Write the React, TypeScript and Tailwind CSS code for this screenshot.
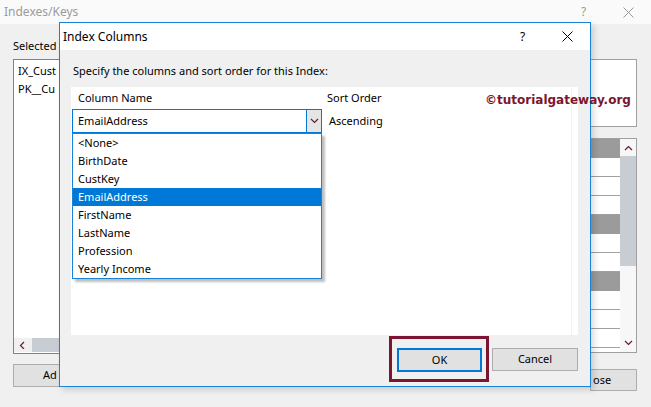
import React from "react";

const columns = [
  "<None>",
  "BirthDate",
  "CustKey",
  "EmailAddress",
  "FirstName",
  "LastName",
  "Profession",
  "Yearly Income",
];

// c = category row, r = plain property row
const gridRows = ["c", "r", "r", "r", "c", "r", "r", "c", "r", "r", "r"];

function CloseGlyph({ color = "#000" }: { color?: string }) {
  return (
    <svg width="11" height="11" viewBox="0 0 11 11">
      <path d="M0.5 0.5 L10.5 10.5 M10.5 0.5 L0.5 10.5" stroke={color} strokeWidth="1" />
    </svg>
  );
}

function Chevron({ dir, color = "#6b1a2c" }: { dir: "up" | "down" | "left"; color?: string }) {
  const d =
    dir === "down"
      ? "M1 2 L4.5 5.5 L8 2"
      : dir === "up"
      ? "M1 6 L4.5 2.5 L8 6"
      : "M6 1 L2.5 4.5 L6 8";
  return (
    <svg width="9" height="8" viewBox="0 0 9 8">
      <path d={d} stroke={color} strokeWidth="1.2" fill="none" />
    </svg>
  );
}

export default function App() {
  return (
    <div className="relative w-[651px] h-[407px] overflow-hidden bg-[#f0f0f0] font-['Noto_Sans',sans-serif] text-[11px] text-black">
      {/* background dialog: Indexes/Keys */}
      <div className="flex h-[24px] items-center bg-[#fafafa] pl-[4px] text-[#9a9a9a]">
        <span className="text-[12px]">Indexes/Keys</span>
        <div className="ml-auto flex h-full items-center">
          <span className="w-[45px] text-center text-[12px]">?</span>
          <span className="flex w-[45px] justify-center">
            <CloseGlyph color="#9a9a9a" />
          </span>
        </div>
      </div>

      <div className="flex">
        {/* left column, cut off by the dialog on top */}
        <div className="ml-[13px] flex w-[47px] flex-col overflow-hidden whitespace-nowrap">
          <div className="mt-[14px] h-[16px] leading-[16px]">Selected</div>
          <div className="mt-[5px] flex h-[295px] w-[210px] flex-col border border-[#828282] bg-white">
            <div className="flex-1 pt-[2px] pl-[4px]">
              <div className="h-[18px] leading-[18px]">IX_Cust</div>
              <div className="h-[18px] leading-[18px]">PK__Cu</div>
            </div>
            <div className="mb-[1px] flex h-[14px] items-center bg-[#f0f0f0]">
              <span className="flex w-[17px] justify-center">
                <Chevron dir="left" />
              </span>
              <div className="ml-[1px] h-full w-[150px] bg-[#c8cdd3]" />
            </div>
          </div>
          <div className="mt-[10px] flex h-[23px] w-[86px] items-center border border-[#adadad] bg-[#e1e1e1] pl-[29px]">
            Ad
          </div>
        </div>

        {/* right column, cut off by the dialog on top */}
        <div className="ml-auto mr-[14px] flex w-[47px] flex-col overflow-hidden">
          <div className="mt-[35px] h-[68px] border border-[#a0a0a0] bg-white" />
          <div className="mt-[11px] flex h-[215px] border border-[#a0a0a0] bg-white">
            <div className="flex-1">
              {gridRows.map((t, i) =>
                t === "c" ? (
                  <div key={i} className="h-[19px] bg-[#9b9b9b]" />
                ) : (
                  <div key={i} className="h-[19px] border-b border-[#a0a0a0] bg-white" />
                )
              )}
            </div>
            <div className="flex w-[16px] flex-col bg-[#f7f7f7]">
              <div className="flex h-[17px] items-center justify-center">
                <Chevron dir="up" />
              </div>
              <div className="h-[110px] bg-[#c8cdd3]" />
              <div className="mt-auto mb-[2px] flex h-[14px] items-center justify-center">
                <Chevron dir="down" />
              </div>
            </div>
          </div>
          <div className="mt-[16px] flex h-[22px] items-center border border-[#adadad] bg-[#e1e1e1] pl-[2px]">
            ose
          </div>
        </div>
      </div>

      {/* foreground dialog: Index Columns */}
      <div className="absolute left-[59px] top-[22px] flex h-[365px] w-[532px] flex-col border border-[#1883d7] bg-[#f0f0f0] shadow-[3px_3px_6px_rgba(0,0,0,0.15)]">
        <div className="flex h-[27px] items-center bg-white pl-[3px]">
          <span className="text-[12px]">Index Columns</span>
          <div className="ml-auto flex h-full items-center">
            <span className="w-[45px] text-center text-[12px]">?</span>
            <span className="flex w-[45px] justify-center">
              <CloseGlyph />
            </span>
          </div>
        </div>

        <div className="flex flex-1 flex-col">
          <div className="mt-[13px] ml-[13px] h-[16px] leading-[16px]">
            Specify the columns and sort order for this Index:
          </div>

          <div className="relative mt-[8px] ml-[11px] h-[248px] w-[507px] bg-white">
            <div className="flex h-[22px] items-center">
              <div className="w-[251px] pl-[7px]">Column Name</div>
              <div className="flex-1 pl-[5px]">Sort Order</div>
            </div>
            <div className="flex h-[24px]">
              <div className="ml-[1px] flex w-[250px] border border-[#0078d7] bg-white">
                <div className="flex flex-1 items-center pl-[5px]">EmailAddress</div>
                <div className="flex w-[15px] items-center justify-center border-l border-[#0078d7] bg-[#e5e5e5]">
                  <Chevron dir="down" />
                </div>
              </div>
              <div className="flex flex-1 items-center pl-[7px]">Ascending</div>
            </div>
            <div className="absolute top-0 bottom-0 right-[6px] border-l border-[#f3f3f3]" />

            {/* open dropdown */}
            <div className="absolute left-[1px] top-[46px] w-[250px] border border-[#1883d7] bg-white shadow-[3px_3px_2px_rgba(0,0,0,0.25)]">
              {columns.map((c) => (
                <div
                  key={c}
                  className={
                    c === "EmailAddress"
                      ? "h-[18px] bg-[#0078d7] pl-[5px] leading-[18px] text-white"
                      : "h-[18px] pl-[5px] leading-[18px]"
                  }
                >
                  {c}
                </div>
              ))}
            </div>
          </div>

          <div className="mt-[13px] mr-[12px] flex justify-end gap-[10px]">
            <div className="relative">
              <button className="h-[24px] w-[85px] border-2 border-[#0078d7] bg-[#e1e1e1] text-center">
                OK
              </button>
              <div className="absolute -left-[8px] -right-[7px] -top-[12px] -bottom-[10px] border-[3px] border-[#7b1530]" />
            </div>
            <button className="h-[23px] w-[86px] border border-[#adadad] bg-[#e1e1e1] text-center">
              Cancel
            </button>
          </div>
        </div>
      </div>

      {/* watermark */}
      <div className="absolute left-[485px] top-[91px] font-['DejaVu_Sans',sans-serif] text-[12px] font-bold text-[#7b1530]">
        ©tutorialgateway.org
      </div>
    </div>
  );
}
